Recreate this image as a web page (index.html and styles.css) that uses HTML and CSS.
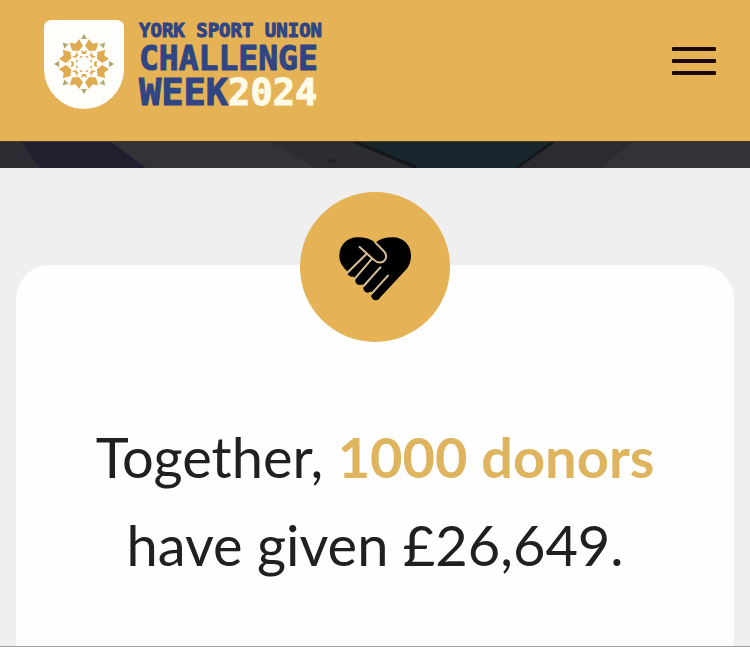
FILE: index.html
```html
<!DOCTYPE html>
<html lang="en">
<head>
  <meta charset="UTF-8">
  <meta name="viewport" content="width=device-width, initial-scale=1">
  <title>York Sport Union Challenge Week 2024</title>
  <link rel="stylesheet" href="styles.css">
</head>
<body>

  <header class="header">
    <a class="logo" href="#">
      <svg class="shield" viewBox="0 0 80 90" aria-hidden="true">
        <defs>
          <g id="petal">
            <path fill="#b3a66c" d="M40 15l3 5h-6z"/>
            <path fill="#e0aa50" transform="rotate(22.5 40 45)" d="M35 20l5 3 5-3 1 8-6 3-6-3z"/>
            <path fill="#d8aa5c" transform="rotate(22.5 40 45)" d="M38 38h4l-2-2z"/>
            <path fill="#e0aa50" d="M37 31l3 2 3-2-1 4h-4z"/>
          </g>
        </defs>
        <path fill="#fffefa" d="M8 1h64q8 0 8 8v41a40 40 0 0 1-80 0V9q0-8 8-8z"/>
        <use href="#petal"/>
        <use href="#petal" transform="rotate(45 40 45)"/>
        <use href="#petal" transform="rotate(90 40 45)"/>
        <use href="#petal" transform="rotate(135 40 45)"/>
        <use href="#petal" transform="rotate(180 40 45)"/>
        <use href="#petal" transform="rotate(225 40 45)"/>
        <use href="#petal" transform="rotate(270 40 45)"/>
        <use href="#petal" transform="rotate(315 40 45)"/>
      </svg>
      <span class="logo-text">
        <span class="logo-small">YORK SPORT UNION</span>
        <span class="logo-mid">CHALLENGE</span>
        <span class="logo-big">WEEK<span class="year">2024</span></span>
      </span>
    </a>
    <button class="menu" type="button" aria-label="Menu">
      <span></span>
      <span></span>
      <span></span>
    </button>
  </header>

  <svg class="banner" viewBox="0 0 750 27" preserveAspectRatio="none" aria-hidden="true">
    <rect width="750" height="27" fill="#323337"/>
    <path fill="#2b2b31" d="M0 0h20l20 27H0z"/>
    <path fill="#1f1f30" d="M20 0h90l36 27H40z"/>
    <path fill="#2c2d30" d="M270 0h85l60 27H315z"/>
    <path fill="#17252d" d="M353 0h202l-38 27H417z"/>
    <path fill="none" stroke="#14171b" stroke-width="3" d="M353 0l64 27M555 0l-38 27"/>
    <path fill="#2c2b30" d="M557 0h76l-32 27h-82z"/>
    <ellipse fill="#222327" cx="332" cy="20" rx="4" ry="2"/>
    <rect width="750" height="1" fill="#4b3a20"/>
  </svg>

  <main class="content">
    <section class="card">
      <div class="badge">
        <svg class="heart" viewBox="28 36 216 192" aria-hidden="true">
          <path d="M137 53C124 42 106 37 84 37C52 37 29 61 29 92C29 112 38 124 54 140L128 204L147 222L228 135C238 124 244 110 244 92C244 61 221 37 190 37C168 37 150 42 137 53z"/>
          <path class="fingers" d="M95 110L66 142M120 125L90 167M145 140L114 190M160 180L138 213"/>
          <path class="lines" d="M90 66L132 104C144 116 158 114 165 106C172 98 170 86 162 78L137 53M111 86L50 146M127 101L76 160M152 127L102 183M175 152L126 206"/>
        </svg>
      </div>
      <h1 class="total">Together, <strong>1000 donors</strong> have given £26,649.</h1>
    </section>
  </main>

</body>
</html>
```

FILE: styles.css
```css
* { box-sizing: border-box; }
body {
  margin: 0;
  min-height: 100vh;
  display: flex;
  flex-direction: column;
  background: #efefef;
  color: #202022;
  font-family: Lato, sans-serif;
}
.header {
  display: flex;
  justify-content: space-between;
  align-items: flex-start;
  padding: 19px 34px 32px 44px;
  background: #e5b256;
}
.logo {
  display: flex;
  gap: 15px;
  text-decoration: none;
}
.shield {
  width: 80px;
  height: 90px;
}
.logo-text {
  display: flex;
  flex-direction: column;
  color: #304583;
  font-family: "DejaVu Sans Mono", monospace;
  font-weight: bold;
  -webkit-text-stroke: 1px;
}
.logo-small {
  font-size: 19px;
  line-height: 22px;
}
.logo-mid {
  font-size: 33px;
  line-height: 36px;
}
.logo-big {
  font-size: 37px;
  line-height: 32px;
}
.year { color: #fffbe6; }
.menu {
  display: flex;
  flex-direction: column;
  gap: 8px;
  margin-top: 28px;
  padding: 0;
  border: none;
  background: none;
  cursor: pointer;
}
.menu span {
  width: 44px;
  height: 4px;
  border-radius: 1px;
  background: #1c0a06;
}
.banner {
  display: block;
  width: 100%;
  height: 27px;
}
.content {
  flex: 1;
  display: flex;
  padding: 97px 16px 0;
  border-bottom: 1px solid #a0a0a0;
}
.card {
  flex: 1;
  display: flex;
  flex-direction: column;
  align-items: center;
  padding: 0 48px;
  border-radius: 34px 34px 0 0;
  background: #fefefe;
}
.badge {
  display: flex;
  justify-content: center;
  align-items: center;
  width: 150px;
  height: 150px;
  margin-top: -73px;
  padding-top: 4px;
  border-radius: 50%;
  background: #e5b256;
}
.heart {
  width: 72px;
  height: 64px;
}
.fingers {
  fill: none;
  stroke: #000;
  stroke-width: 26;
  stroke-linecap: round;
}
.lines {
  fill: none;
  stroke: #d8bd95;
  stroke-width: 6;
  stroke-linecap: round;
  stroke-linejoin: round;
}
.total {
  max-width: 600px;
  margin: 71px 0 0;
  font-size: 56px;
  font-weight: normal;
  line-height: 88px;
  text-align: center;
}
.total strong { color: #deb45f; }
```
